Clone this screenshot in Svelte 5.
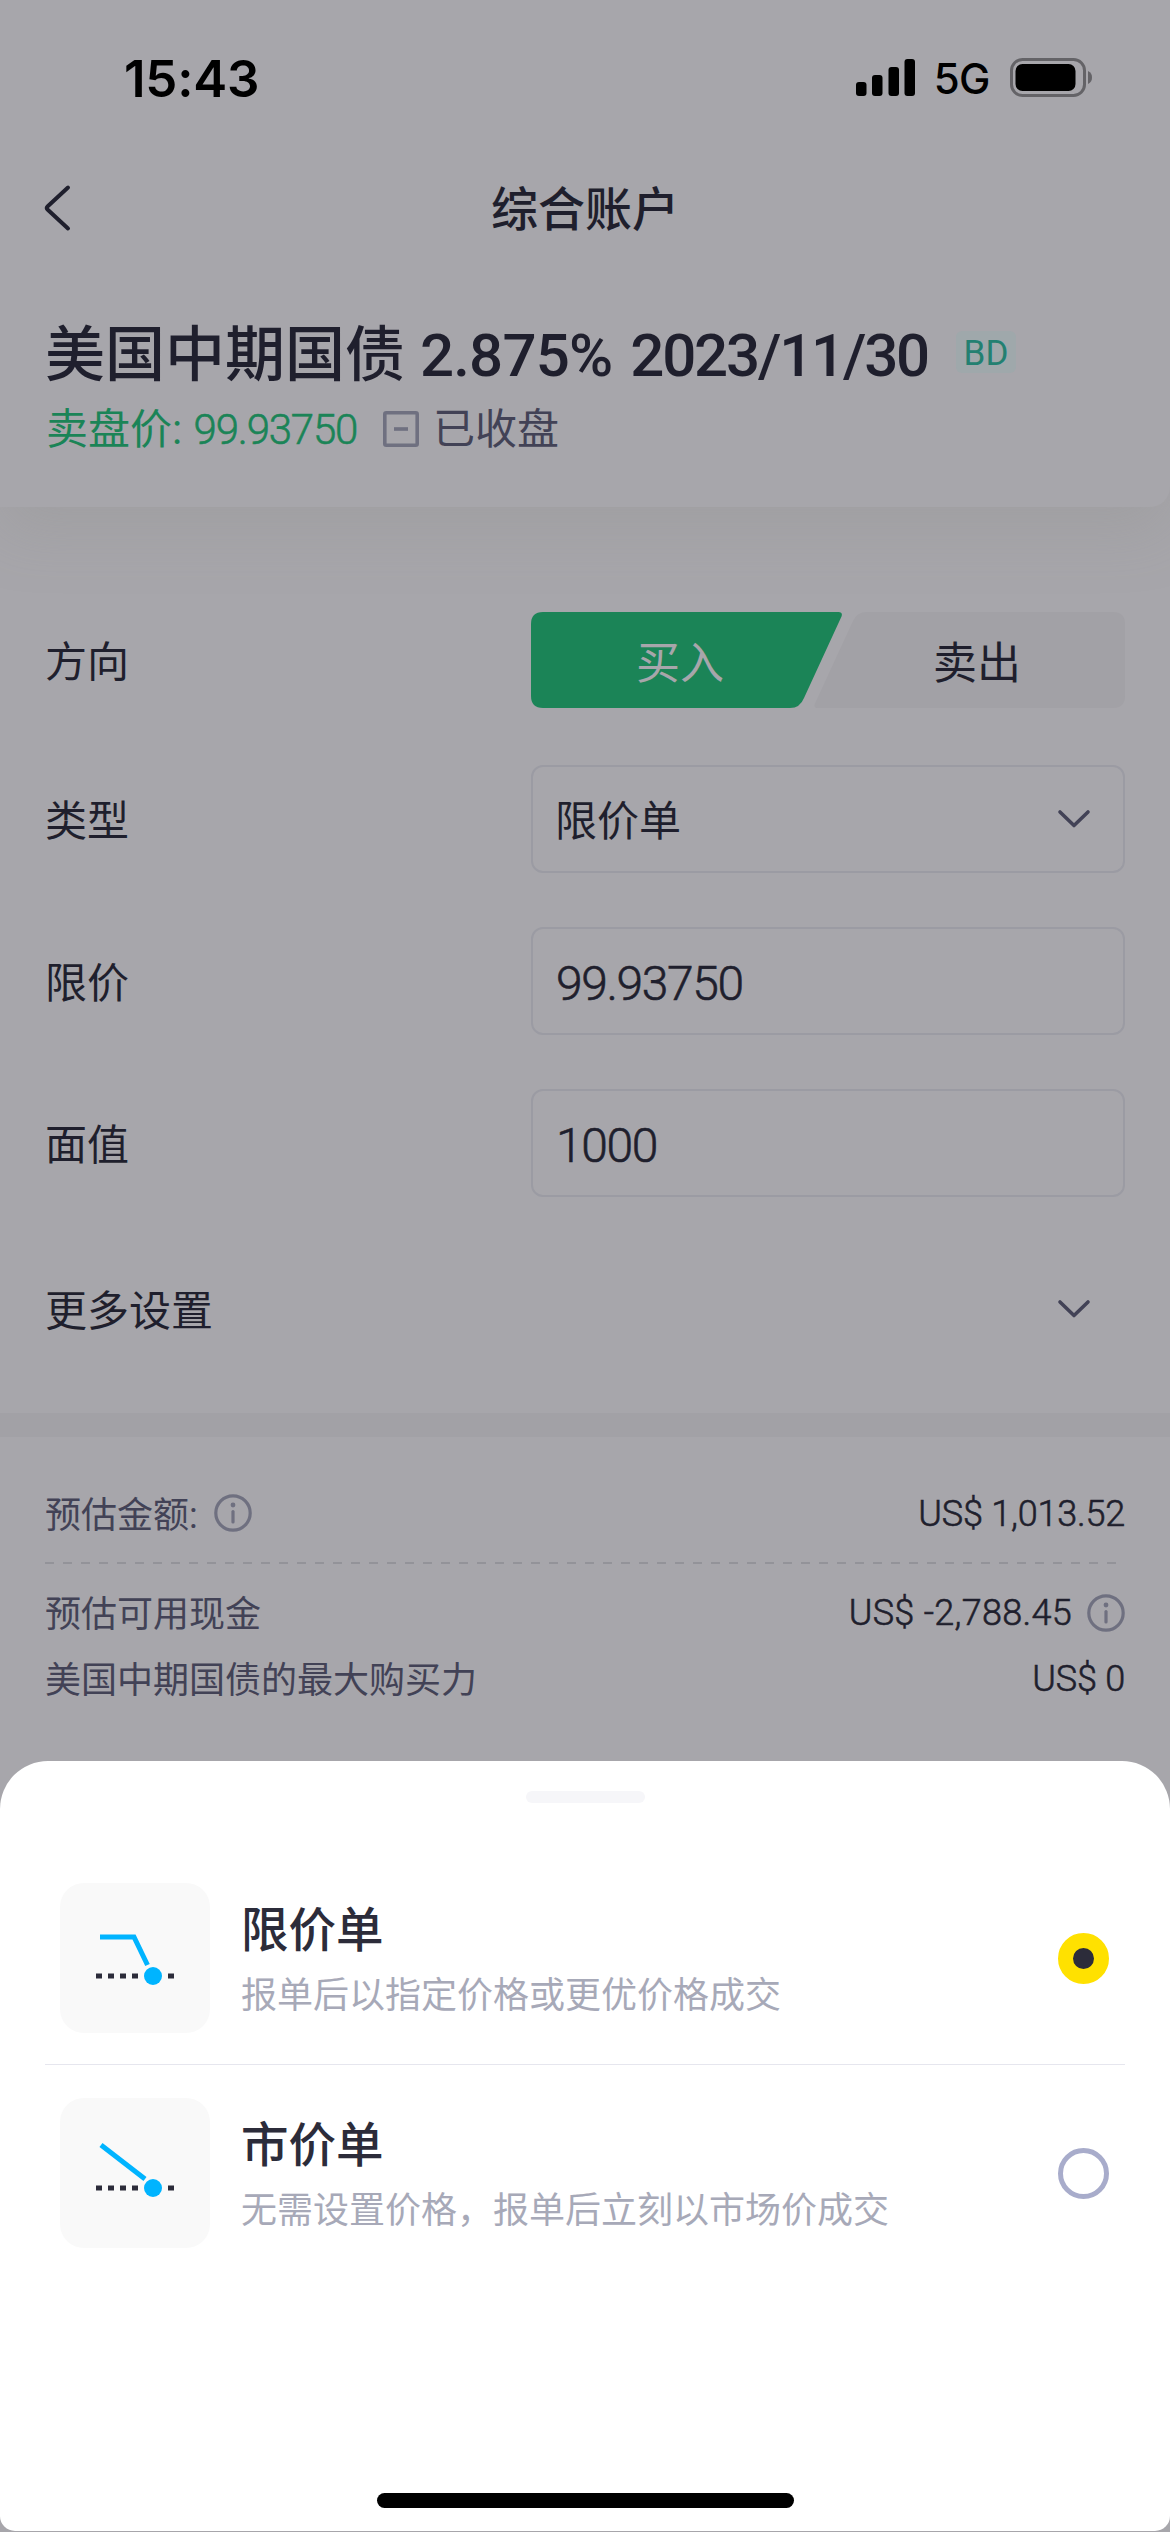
<script lang="ts">
	type OrderType = { id: string; name: string; desc: string; line: string; level: number }

	const orderTypes: OrderType[] = [
		{ id: 'limit', name: '限价单', desc: '报单后以指定价格或更优价格成交', line: '40,54 74,54 87.5,82', level: 93 },
		{ id: 'market', name: '市价单', desc: '无需设置价格，报单后立刻以市场价成交', line: '41,47 85,81', level: 90 }
	]

	let selected = $state('limit')
	let price = $state('99.93750')
	let faceValue = $state('1000')

	const selectedName = $derived(orderTypes.find((t) => t.id === selected)?.name)
</script>

{#snippet chevron()}
	<svg class="chevron" width="36" height="22" viewBox="0 0 36 22">
		<path d="M4 4 18 17.5 32 4" />
	</svg>
{/snippet}

{#snippet info()}
	<svg class="info" width="38" height="38" viewBox="0 0 38 38">
		<circle cx="19" cy="19" r="17.2" />
		<path d="M19 17.5V28" />
		<circle class="dot" cx="19" cy="11" r="2.4" />
	</svg>
{/snippet}

<div class="screen">
	<header>
		<div class="status-bar">
			<span class="time">15:43</span>
			<div class="indicators">
				<svg width="60" height="38" viewBox="0 0 60 38">
					<rect x="0" y="23" width="10.5" height="14" rx="3" />
					<rect x="16" y="16" width="10.5" height="21" rx="3" />
					<rect x="32.5" y="8" width="10.5" height="29" rx="3" />
					<rect x="48.5" y="0" width="10.5" height="37" rx="3" />
				</svg>
				<span class="network">5G</span>
				<svg width="82" height="40" viewBox="0 0 82 40">
					<rect class="battery-case" x="1.5" y="1.5" width="73" height="36" rx="11" />
					<rect x="5.5" y="6" width="60" height="27" rx="7" />
					<path class="battery-tip" d="M78 13c3 1.4 4 3.8 4 6.5S81 24.6 78 26z" />
				</svg>
			</div>
		</div>

		<nav>
			<button class="back" aria-label="返回">
				<svg width="32" height="48" viewBox="0 0 32 48">
					<path d="M27 3.5 6.5 22.5q-1.6 1.5 0 3L27 44.5" />
				</svg>
			</button>
			<h1>综合账户</h1>
		</nav>

		<div class="bond">
			<h2>美国中期国债 <span class="rate">2.875%</span> <span class="maturity">2023/11/30</span></h2>
			<span class="badge">BD</span>
		</div>
		<div class="quote">
			<span class="ask">卖盘价: <span class="ask-price">99.93750</span></span>
			<svg width="36" height="36" viewBox="0 0 36 36">
				<rect x="1.8" y="1.8" width="32.4" height="32.4" rx="1.5" />
				<path d="M11 18H25" />
			</svg>
			<span>已收盘</span>
		</div>
	</header>

	<form>
		<div class="field direction">
			<span class="caption">方向</span>
			<div class="toggle">
				<svg width="594" height="96" viewBox="0 0 594 96">
					<path class="buy" d="M12 0H307.5Q312 0 310.5 4.5L273 86Q269 96 259 96H12Q0 96 0 84V12Q0 0 12 0Z" />
					<path class="sell" d="M336 0H582Q594 0 594 12V84Q594 96 582 96H287Q282 96 284 91.5L322 9Q326 0 336 0Z" />
				</svg>
				<span class="buy-label">买入</span>
				<span class="sell-label">卖出</span>
			</div>
		</div>
		<div class="field">
			<span class="caption">类型</span>
			<div class="box">
				<span class="caption">{selectedName}</span>
				{@render chevron()}
			</div>
		</div>
		<label class="field">
			<span class="caption">限价</span>
			<input class="box number" bind:value={price} />
		</label>
		<label class="field">
			<span class="caption">面值</span>
			<input class="box number" bind:value={faceValue} />
		</label>
		<div class="field more">
			<span class="caption">更多设置</span>
			{@render chevron()}
		</div>
	</form>

	<section class="summary">
		<div class="line">
			<span class="label"><span class="caption">预估金额:</span> {@render info()}</span>
			<span class="amount">US$ 1,013.52</span>
		</div>
		<svg class="dashes" width="1080" height="2" viewBox="0 0 1080 2">
			<path d="M0 1H1074" />
		</svg>
		<div class="line">
			<span class="label"><span class="caption">预估可用现金</span></span>
			<span class="amount cash">US$ -2,788.45 {@render info()}</span>
		</div>
		<div class="line">
			<span class="label"><span class="caption">美国中期国债的最大购买力</span></span>
			<span class="amount">US$ 0</span>
		</div>
	</section>

	<section class="sheet">
		<div class="handle"></div>
		<div class="options">
			{#each orderTypes as type (type.id)}
				<button class="option" onclick={() => (selected = type.id)}>
					<svg class="thumb" width="150" height="150" viewBox="0 0 150 150">
						<polyline points={type.line} />
						<path d="M36 {type.level}H80M108 {type.level}H114" />
						<circle cx="93" cy={type.level} r="9" />
					</svg>
					<span class="text">
						<span class="name">{type.name}</span>
						<span class="desc">{type.desc}</span>
					</span>
					<span class="radio" class:checked={selected === type.id}></span>
				</button>
			{/each}
		</div>
		<div class="home-indicator"></div>
	</section>
</div>

<style>
	:global(body) {
		background: #a7a6ab;
	}

	.screen {
		display: flex;
		flex-direction: column;
		width: 1170px;
		height: 2532px;
		overflow: hidden;
		background: #a7a6ab;
		color: #1f1f2d;
		font-family: Roboto, 'Noto Sans CJK SC', sans-serif;
		font-size: 42px;
	}

	.screen * {
		box-sizing: border-box;
	}

	svg {
		display: block;
		flex: none;
	}

	button {
		padding: 0;
		border: 0;
		background: none;
		color: inherit;
		font: inherit;
		text-align: left;
	}

	header {
		flex: none;
		height: 507px;
		border-radius: 0 0 20px 0;
		box-shadow: 0 24px 60px rgb(140 140 135 / 0.25);
	}

	.status-bar {
		display: flex;
		justify-content: space-between;
		align-items: center;
		height: 156px;
		padding: 0 78px 0 124px;
		color: #000;
		font-family: Inter, sans-serif;
	}

	.time {
		font-size: 51px;
		font-weight: 600;
		letter-spacing: -0.2px;
	}

	.indicators {
		display: flex;
		align-items: center;
	}

	.network {
		margin: 0 20px 0 18px;
		padding-top: 2px;
		font-size: 42px;
		font-weight: 450;
		line-height: 40px;
		letter-spacing: -0.5px;
	}

	.battery-case {
		fill: none;
		stroke: #646367;
		stroke-width: 3;
	}

	.battery-tip {
		fill: #646367;
	}

	nav {
		display: grid;
		grid-template-columns: 100px 1fr 100px;
		align-items: center;
		height: 104px;
	}

	.back {
		padding-left: 41px;
	}

	.back path {
		fill: none;
		stroke: #1f1f2d;
		stroke-width: 4;
		stroke-linecap: round;
	}

	h1 {
		margin: 0;
		padding-top: 4px;
		font-size: 47px;
		font-weight: 500;
		line-height: 60px;
		text-align: center;
	}

	.bond {
		display: flex;
		align-items: center;
		height: 84px;
		margin-top: 50px;
		padding-left: 45px;
	}

	h2 {
		width: 885px;
		margin: 0;
		padding-top: 7px;
		font-size: 60px;
		font-weight: 500;
		line-height: 84px;
		white-space: nowrap;
	}

	.rate {
		letter-spacing: -0.8px;
	}

	.maturity {
		margin-left: 3px;
		letter-spacing: -2.2px;
	}

	.badge {
		width: 60px;
		height: 42px;
		margin-left: 26px;
		border-radius: 6px;
		background: #9fa8ab;
		color: #238071;
		font-size: 35px;
		line-height: 45px;
		text-align: center;
	}

	.quote {
		display: flex;
		align-items: center;
		height: 62px;
		padding-left: 46px;
		color: #424256;
	}

	.ask {
		width: 337px;
		color: #1b8457;
		white-space: nowrap;
	}

	.ask-price {
		margin-left: 1px;
		font-weight: 300;
		letter-spacing: -1.2px;
	}

	/* Light is too thin for figures at this size, Regular too heavy */
	.ask-price,
	.number,
	.amount {
		-webkit-text-stroke: 0.6px currentColor;
	}

	.quote svg {
		margin-top: 8px;
		margin-right: 14px;
		fill: none;
		stroke: #6f7080;
		stroke-width: 3.6;
	}

	form {
		flex: none;
		height: 906px;
		padding: 105px 45px 0;
	}

	.caption {
		padding-bottom: 3px;
	}

	.field {
		display: grid;
		grid-template-columns: 486px 594px;
		align-items: center;
		height: 108px;
		margin-bottom: 54px;
	}

	.direction {
		height: 96px;
		margin-bottom: 57px;
	}

	.more {
		height: 112px;
		margin-top: 56px;
	}

	.more .chevron {
		margin-left: 525px;
	}

	.toggle {
		display: grid;
		grid-template-columns: 298px 296px;
		align-items: center;
		font-size: 44px;
		text-align: center;
	}

	.toggle svg {
		grid-area: 1 / 1 / 2 / 3;
	}

	.buy {
		fill: #1b8457;
	}

	.sell {
		fill: #a2a1a6;
	}

	.buy-label {
		grid-area: 1 / 1;
		color: #a7a6ab;
	}

	.sell-label {
		grid-area: 1 / 2;
	}

	.box {
		display: flex;
		align-items: center;
		justify-content: space-between;
		width: 594px;
		height: 108px;
		padding: 0 31px 0 22px;
		border: 2px solid #9b9ba3;
		border-radius: 12px;
		background: none;
		color: inherit;
		font: inherit;
	}

	.number {
		padding-top: 4px;
		padding-left: 23px;
		font-size: 48px;
		font-weight: 300;
		letter-spacing: -1.4px;
	}

	.chevron {
		fill: none;
		stroke: #424256;
		stroke-width: 3.6;
		stroke-linecap: round;
		stroke-linejoin: round;
	}

	.summary {
		flex: none;
		height: 324px;
		margin-top: 24px;
		padding: 43px 45px 0;
		box-shadow: 0 -24px 0 #a2a1a6;
		font-size: 36px;
	}

	.line {
		display: flex;
		align-items: center;
		justify-content: space-between;
		height: 66px;
	}

	.label,
	.amount {
		display: flex;
		align-items: center;
		gap: 15px;
	}

	.label {
		color: #424256;
	}

	.label .info {
		margin-left: 1px;
	}

	.amount {
		padding-top: 1px;
		font-weight: 300;
		letter-spacing: -0.2px;
	}

	.cash {
		letter-spacing: 0.3px;
	}

	.info {
		fill: none;
		stroke: #6f7080;
		stroke-width: 3.2;
		stroke-linecap: round;
	}

	.info .dot {
		fill: #6f7080;
		stroke: none;
	}

	.dashes {
		margin: 16px 0 15px;
		stroke: #939399;
		stroke-width: 2;
		stroke-dasharray: 9 9;
	}

	.sheet {
		display: flex;
		flex-direction: column;
		align-items: center;
		flex: none;
		height: 770px;
		padding-top: 30px;
		border-radius: 48px 48px 15px 15px;
		background: #fff;
	}

	.handle {
		width: 119px;
		height: 12px;
		border-radius: 6px;
		background: #f6f6f9;
	}

	.options {
		width: 1080px;
		margin-top: 49px;
	}

	.option {
		display: flex;
		align-items: center;
		width: 100%;
		height: 212px;
		padding: 0 16px 0 15px;
	}

	.option + .option {
		height: 217px;
		border-top: 1px solid #e6e6ee;
	}

	.thumb {
		margin-right: 31px;
		border-radius: 24px;
		background: #f9f9f9;
	}

	.thumb polyline {
		fill: none;
		stroke: #00b4ff;
		stroke-width: 5;
	}

	.thumb path {
		stroke: #2c2c3a;
		stroke-width: 5;
		stroke-dasharray: 6;
	}

	.thumb circle {
		fill: #00b4ff;
	}

	.text {
		display: flex;
		flex: 1;
		flex-direction: column;
		padding-top: 5px;
	}

	.name {
		color: #2c2c3a;
		font-size: 47.5px;
		font-weight: 500;
		line-height: 70px;
	}

	.desc {
		color: #a7a9b8;
		font-size: 36px;
		line-height: 60px;
	}

	.radio {
		width: 51px;
		height: 51px;
		border: 5px solid #a8accb;
		border-radius: 50%;
	}

	.radio.checked {
		border: 15px solid #ffe100;
		background: #2c2c3a;
	}

	.home-indicator {
		width: 417px;
		height: 15px;
		margin-top: auto;
		margin-bottom: 23px;
		border-radius: 8px;
		background: #000;
	}
</style>
